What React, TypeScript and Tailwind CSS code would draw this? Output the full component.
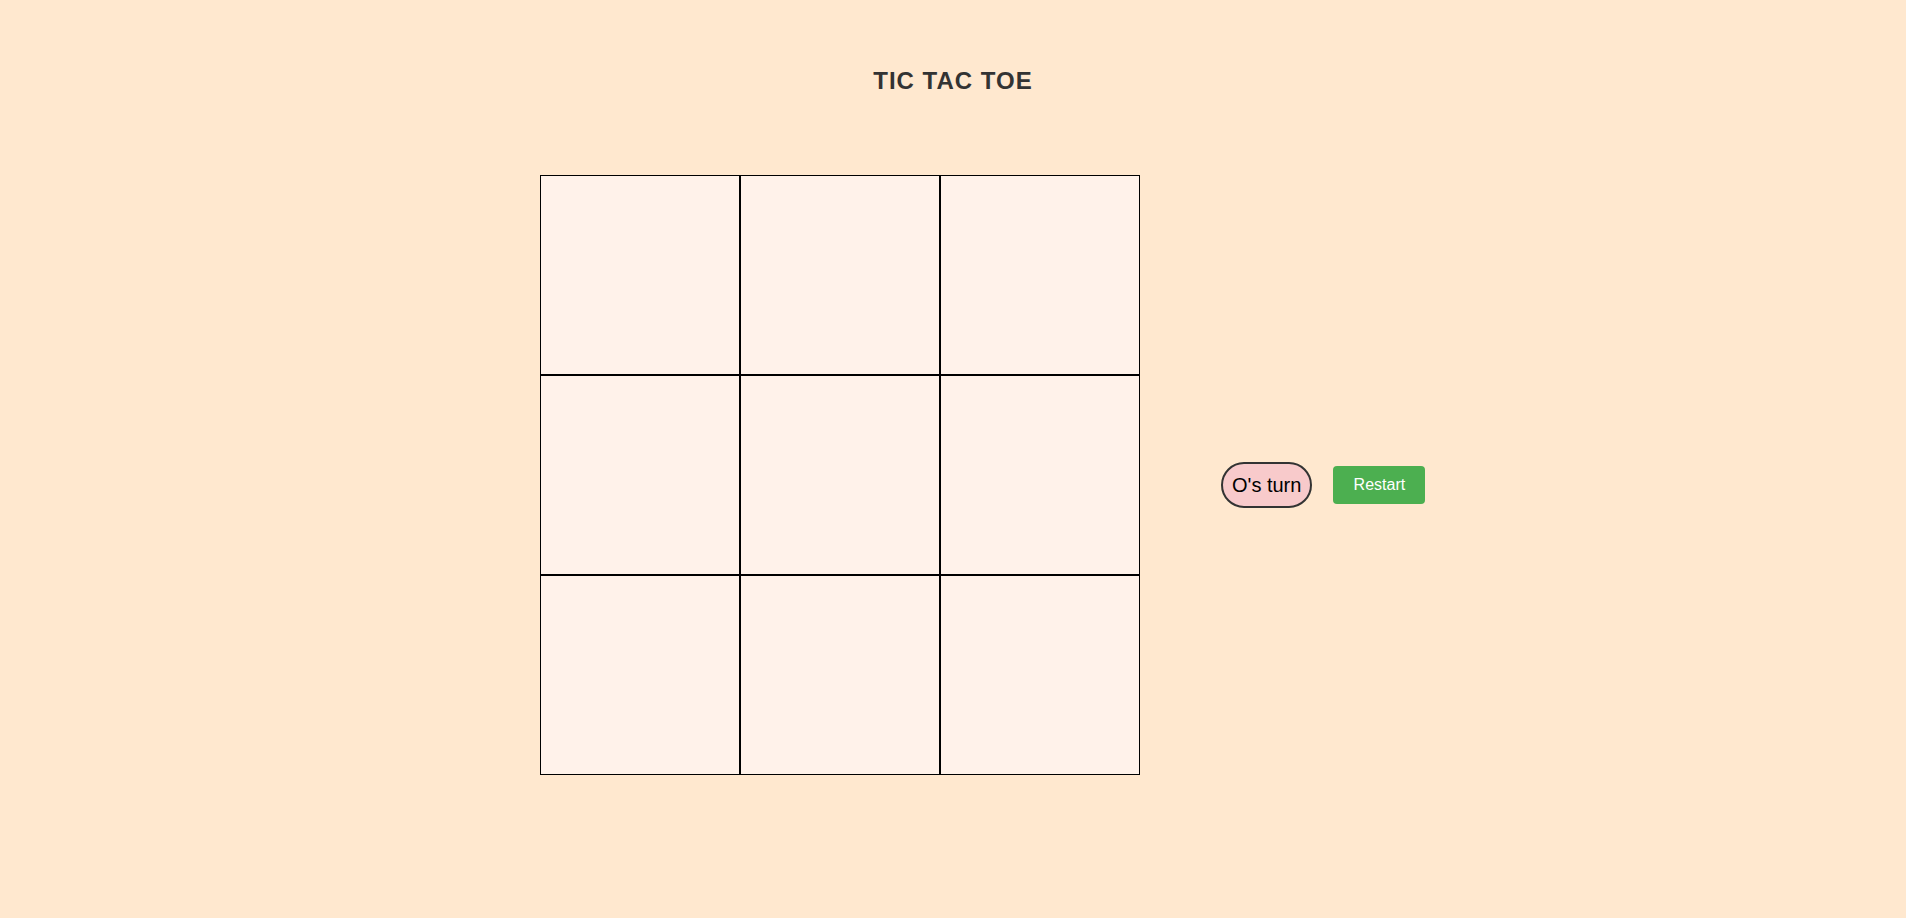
import { useState } from "react";

type Mark = "X" | "O" | null;

const font = { fontFamily: '"Liberation Sans", Arial, sans-serif' };

export default function App() {
  const [cells, setCells] = useState<Mark[]>(Array(9).fill(null));
  const [turn, setTurn] = useState<"X" | "O">("O");

  const play = (i: number) => {
    if (cells[i]) return;
    const next = [...cells];
    next[i] = turn;
    setCells(next);
    setTurn(turn === "O" ? "X" : "O");
  };

  const restart = () => {
    setCells(Array(9).fill(null));
    setTurn("O");
  };

  return (
    <div style={font} className="min-h-screen w-full bg-[#ffe8cf] pt-[67px]">
      <h1 className="text-center text-[24px] leading-[28px] font-bold tracking-[1px] text-[#333333]">
        TIC TAC TOE
      </h1>
      <div className="mt-[80px] flex items-start pl-[540px]">
        <div className="grid w-[600px] grid-cols-3">
          {cells.map((c, i) => (
            <button
              key={i}
              onClick={() => play(i)}
              className="flex h-[200px] w-[200px] items-center justify-center border border-black bg-[#fff2ea] text-[80px] text-[#333333]"
            >
              {c}
            </button>
          ))}
        </div>
        <div className="ml-[81px] mt-[287px] flex items-center gap-[21px]">
          <div className="flex h-[46px] items-center rounded-full border-2 border-[#333333] bg-[#f8cacb] px-[9px] text-[20px] leading-[23px] text-black">
            {turn}'s turn
          </div>
          <button
            onClick={restart}
            className="h-[38px] w-[92px] rounded-[4px] bg-[#4caf50] text-[16px] text-white"
          >
            Restart
          </button>
        </div>
      </div>
    </div>
  );
}
